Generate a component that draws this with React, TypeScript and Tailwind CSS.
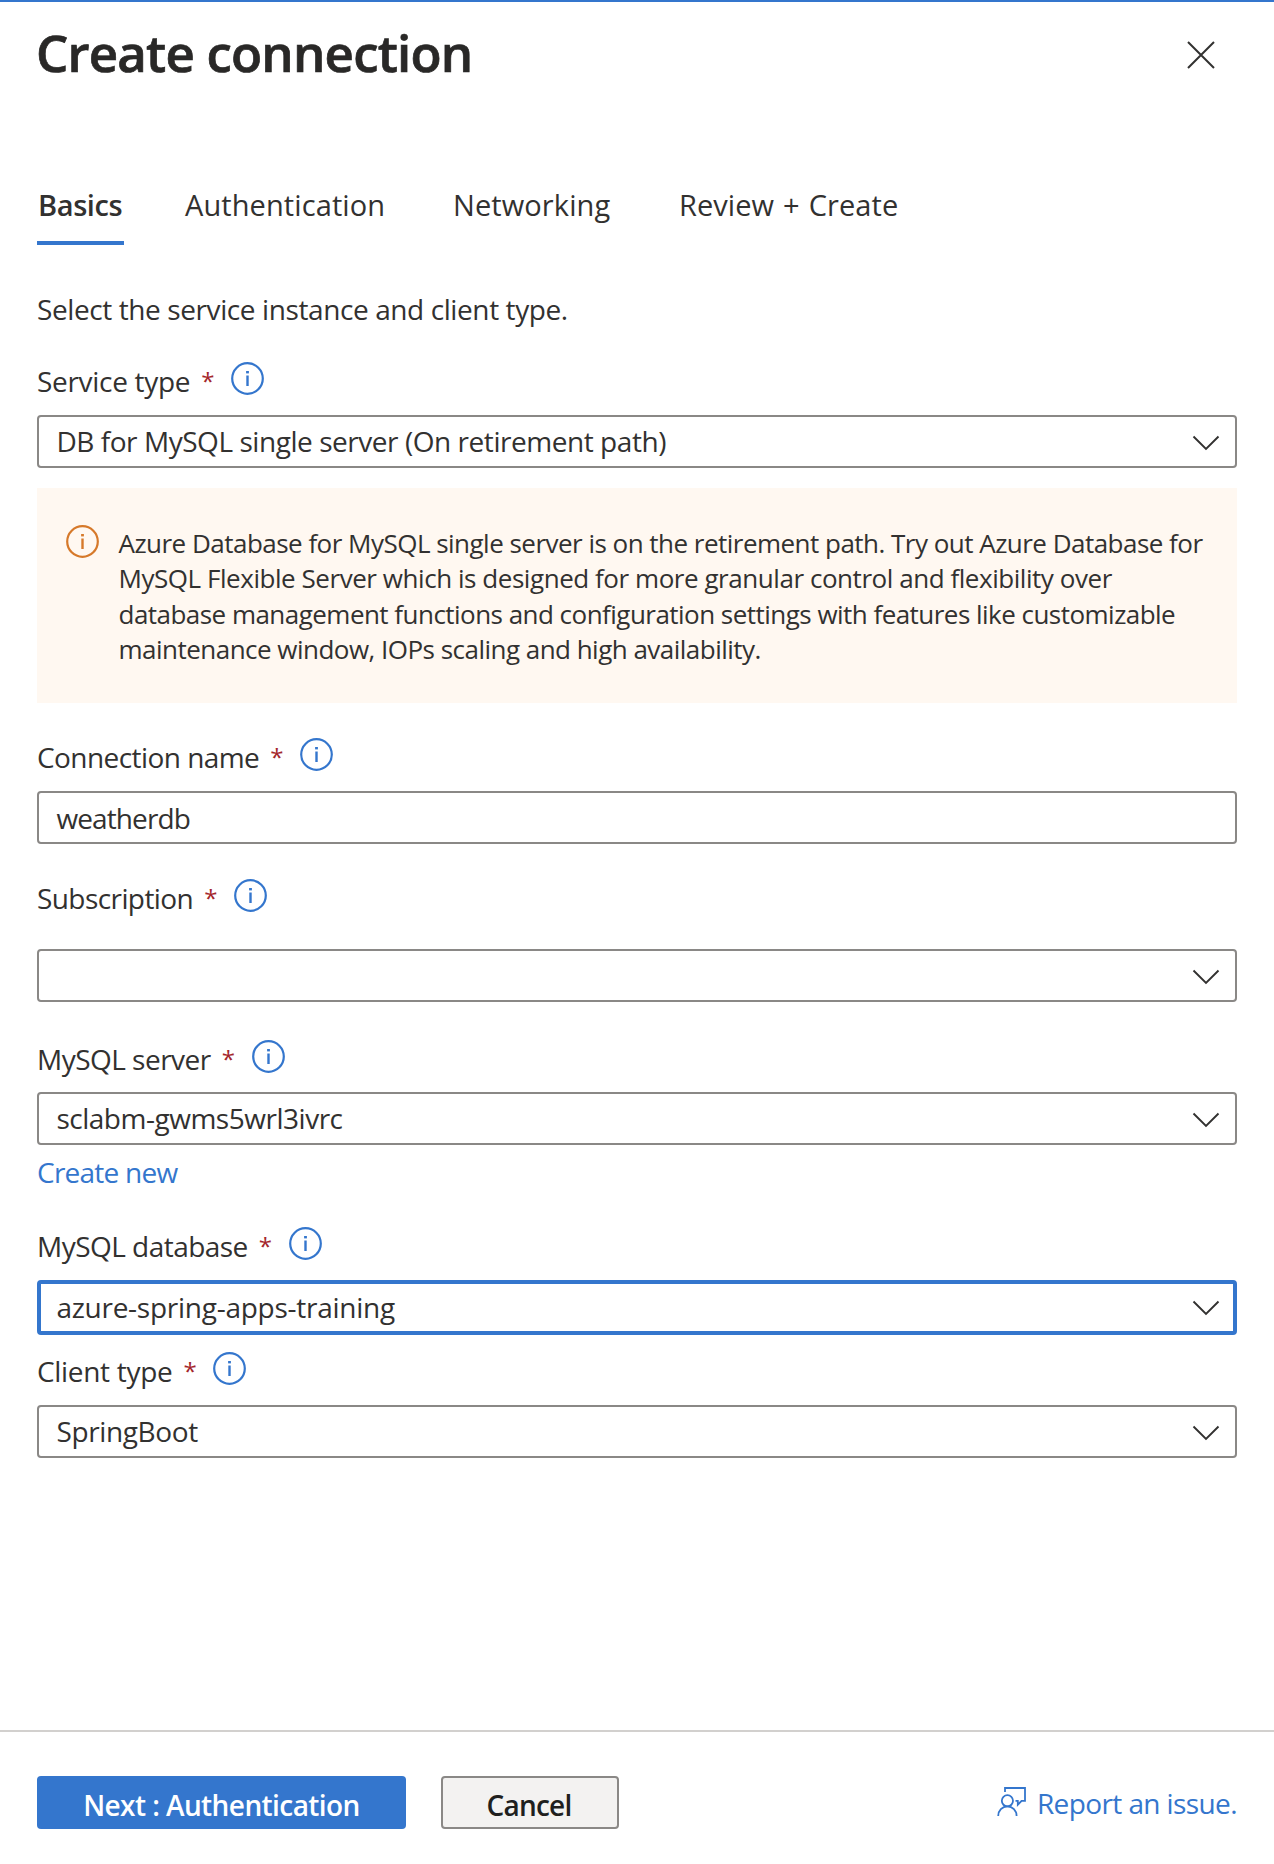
import React from "react";

function InfoIcon({ className }: { className: string }) {
  return (
    <svg viewBox="0 0 33 33" className={`size-[33px] shrink-0 ${className}`} fill="none">
      <circle cx="16.5" cy="16.5" r="15.3" stroke="currentColor" strokeWidth="2.2" />
      <rect x="15.3" y="13.5" width="2.4" height="10.5" fill="currentColor" />
      <rect x="15.1" y="9" width="2.8" height="2.4" fill="currentColor" />
    </svg>
  );
}

function Chevron() {
  return (
    <svg viewBox="0 0 28 16" className="mt-[2px] mr-[15px] h-4 w-7 shrink-0 text-[#323130]" fill="none">
      <path d="M1.5 1.5 14 14 26.5 1.5" stroke="currentColor" strokeWidth="1.9" />
    </svg>
  );
}

function Label({ text, tracking }: { text: string; tracking: string }) {
  return (
    <div className="flex h-[38px] items-start whitespace-nowrap">
      <span className={`leading-[38px] ${tracking}`}>{text}</span>
      <span className="ml-[11px] w-[11px] text-[24px] leading-[38px] text-[#a4262c]">*</span>
      <InfoIcon className="ml-[19px] text-[#3476cd]" />
    </div>
  );
}

function Box({ value, tracking = "", chevron = true, focused = false }: { value: string; tracking?: string; chevron?: boolean; focused?: boolean }) {
  return (
    <div
      className={`flex items-center justify-between rounded-[4px] whitespace-nowrap ${
        focused ? "h-[55px] border-4 border-[#3476cd] pb-px pl-[15.4px] [&>svg]:mr-[13px]" : "h-[53px] border-2 border-[#8a8886] pl-[17.4px]"
      }`}
    >
      <span className={`leading-[38px] ${chevron ? "pb-px" : ""} ${tracking}`}>{value}</span>
      {chevron && <Chevron />}
    </div>
  );
}

export default function App() {
  return (
    <div className="flex h-[1864px] w-[1274px] flex-col overflow-hidden border-t-2 border-[#3476cd] bg-white font-['Open_Sans',sans-serif] text-[28px] text-[#323130]">
      <header className="flex h-[104px] items-start justify-between pr-[59px] pl-[36px]">
        <h1 className="mt-[14px] text-[51px] leading-[72px] font-semibold tracking-[-0.8px] whitespace-nowrap text-[#292827] [-webkit-text-stroke:0.7px_#292827]">
          Create connection
        </h1>
        <svg viewBox="0 0 28 28" className="mt-[39px] size-7" fill="none">
          <path d="M1 1 27 27M27 1 1 27" stroke="#323130" strokeWidth="2" />
        </svg>
      </header>

      <nav className="mt-[78px] flex h-[61px] items-start pl-[37px] text-[29px] leading-[42px] whitespace-nowrap">
        <div className="h-[61px] w-[87px] border-b-4 border-[#3476cd] pl-px font-semibold tracking-[-0.4px]">Basics</div>
        <div className="ml-[61px] w-[268px] tracking-[0.09px]">Authentication</div>
        <div className="w-[225px] tracking-[0.1px]">Networking</div>
        <div className="pl-px tracking-[0.06px] [word-spacing:1.4px]">Review + Create</div>
      </nav>

      <main className="flex flex-col pr-[37px] pl-[37px]">
        <p className="mt-[45px] leading-[38px] tracking-[-0.4px] whitespace-nowrap">Select the service instance and client type.</p>

        <div className="mt-[34px] flex flex-col gap-[15px]">
          <Label text="Service type" tracking="tracking-[-0.31px]" />
          <Box value="DB for MySQL single server (On retirement path)" tracking="tracking-[-0.45px]" />
        </div>

        <div className="mt-5 flex h-[215px] items-start bg-[#fff8f1] pl-[28.5px]">
          <InfoIcon className="mt-[37px] text-[#d6792a]" />
          <p className="mt-[38px] ml-[20px] text-[26px] leading-[35.3px] whitespace-nowrap">
            <span className="tracking-[-0.52px]">Azure Database for MySQL single server is on the retirement path. Try out Azure Database for</span>
            <br />
            <span className="tracking-[-0.45px]">MySQL Flexible Server which is designed for more granular control and flexibility over</span>
            <br />
            <span className="tracking-[-0.53px]">database management functions and configuration settings with features like customizable</span>
            <br />
            <span className="tracking-[-0.52px]">maintenance window, IOPs scaling and high availability.</span>
          </p>
        </div>

        <div className="mt-[35px] flex flex-col gap-[15px]">
          <Label text="Connection name" tracking="tracking-[-0.56px]" />
          <Box value="weatherdb" tracking="tracking-[-0.88px]" chevron={false} />
        </div>

        <div className="mt-[35px] flex flex-col gap-8">
          <Label text="Subscription" tracking="tracking-[-0.58px]" />
          <Box value="" />
        </div>

        <div className="mt-[38px] flex flex-col gap-[14px]">
          <Label text="MySQL server" tracking="tracking-[-0.52px]" />
          <Box value="sclabm-gwms5wrl3ivrc" tracking="tracking-[-0.48px]" />
        </div>
        <a className="mt-[8px] leading-[38px] tracking-[-0.75px] text-[#3476cd]">Create new</a>

        <div className="mt-[36px] flex flex-col gap-[15px]">
          <Label text="MySQL database" tracking="tracking-[-0.53px]" />
          <Box value="azure-spring-apps-training" tracking="tracking-[-0.26px]" focused />
        </div>

        <div className="mt-[17px] flex flex-col gap-[15px]">
          <Label text="Client type" tracking="tracking-[-0.31px]" />
          <Box value="SpringBoot" tracking="tracking-[-0.36px]" />
        </div>
      </main>

      <footer className="mt-auto flex h-[134px] items-start border-t-2 border-[#d2d0ce] px-[37px] pt-[44px] leading-[38px] whitespace-nowrap">
        <button className="h-[53px] w-[369px] rounded-[4px] bg-[#3476cd] pt-[4px] font-semibold tracking-[-0.57px] text-white">Next : Authentication</button>
        <button className="ml-[35px] h-[53px] w-[178px] rounded-[4px] border-2 border-[#8a8886] bg-[#f3f2f1] pt-[4px] pr-[2px] font-semibold tracking-[-0.8px] text-[#201f1e]">Cancel</button>
        <a className="ml-auto flex items-start text-[#3476cd]">
          <svg viewBox="0 0 30 30" className="mt-[10px] mr-[10px] size-[30px]" fill="none" stroke="currentColor" strokeWidth="1.8">
            <path d="M8 6V2H28V14.8H24.6L20.8 18.7V14.8H18.5" />
            <circle cx="10.4" cy="14.8" r="5.6" />
            <path d="M1.2 30C1.2 24.6 5.2 20.4 10.4 20.4S19.6 24.6 19.6 30" />
          </svg>
          <span className="mt-[8px] tracking-[-0.6px]">Report an issue.</span>
        </a>
      </footer>
    </div>
  );
}
